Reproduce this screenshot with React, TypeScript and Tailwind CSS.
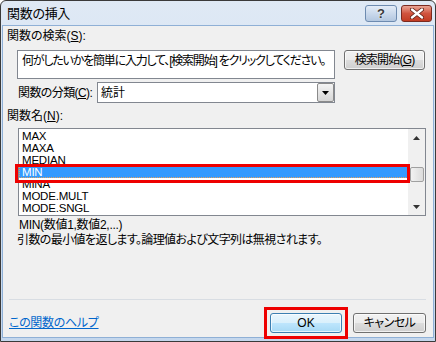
import React from "react";

const font = "font-['Liberation_Sans','Noto_Sans_CJK_JP',sans-serif] [font-feature-settings:'palt']";

function U({ c }: { c: string }) {
  return <span className="underline underline-offset-[1px]">{c}</span>;
}

function Btn({ children, w, def }: { children: React.ReactNode; w: string; def?: boolean }) {
  return (
    <div
      className={`${w} h-[20px] rounded-[3px] border ${def ? "border-[#3c7fb1]" : "border-[#707070]"} flex items-center justify-center text-[12px] leading-[12px] text-black whitespace-nowrap`}
      style={{
        background: def
          ? "linear-gradient(#eaf6fd 0%, #d9f0fc 50%, #bee6fd 50%, #a7d9f5 100%)"
          : "linear-gradient(#f2f2f2 0%, #ebebeb 50%, #dddddd 50%, #cfcfcf 100%)",
        boxShadow: "inset 0 0 0 1px rgba(255,255,255,0.7)",
      }}
    >
      {children}
    </div>
  );
}

const items = ["MAX", "MAXA", "MEDIAN", "MIN", "MINA", "MODE.MULT", "MODE.SNGL"];

export default function App() {
  return (
    <div className={`${font} w-[436px] h-[342px] flex flex-col border border-[#3a3a3a] rounded-t-[6px] bg-gradient-to-b from-[#dfe9f5] to-[#c4d7ed] text-black overflow-hidden`}>
      {/* title bar */}
      <div className="h-[24px] flex items-start justify-between pl-[6px] pr-[3px]">
        <div className="text-[13px] leading-[13px] mt-[6px] tracking-[-0.3px]">関数の挿入</div>
        <div className="flex gap-[4px] mt-[4px]">
          <div className="w-[32px] h-[17px] rounded-[3px] border border-[#6d8bb0] flex items-center justify-center bg-gradient-to-b from-[#e3ecf7] via-[#cad9ec] to-[#b3c7e0]">
            <span className="text-[13px] leading-[13px] font-bold text-[#3a3a3a] [text-shadow:0_0_2px_#fff]">?</span>
          </div>
          <div className="w-[31px] h-[17px] rounded-[3px] border border-[#7a2a20] flex items-center justify-center bg-gradient-to-b from-[#e8a394] via-[#d0533e] to-[#c23b22]">
            <svg width="14" height="11" viewBox="0 0 14 11">
              <path d="M2 1.5 L12 9.5 M12 1.5 L2 9.5" stroke="#5a1f16" strokeWidth="4" strokeLinecap="round" />
              <path d="M2 1.5 L12 9.5 M12 1.5 L2 9.5" stroke="#ffffff" strokeWidth="2.4" strokeLinecap="round" />
            </svg>
          </div>
        </div>
      </div>

      {/* content panel */}
      <div className="flex-1 ml-[1px] mr-[1px] mb-[3px] bg-[#f0f0f0] border border-[#8fb0d6] flex flex-col text-[12px] leading-[12px]">
        <div className="mt-[4px] ml-[4px]">関数の検索(<U c="S" />):</div>

        <div className="mt-[8px] flex items-start">
          <div className="ml-[14px] w-[318px] h-[29px] bg-white border border-[#828790] pl-[4px] pt-[4px] whitespace-nowrap overflow-hidden tracking-[-1.2px]">
            何がしたいかを簡単に入力して、[検索開始] をクリックしてください。
          </div>
          <div className="ml-[9px]">
            <Btn w="w-[81px]"><span className="tracking-[-0.8px]">検索開始(<U c="G" />)</span></Btn>
          </div>
        </div>

        <div className="mt-[3px] flex items-center">
          <div className="ml-[15px] w-[79px] whitespace-nowrap tracking-[-0.6px]">関数の分類(<U c="C" />):</div>
          <div className="w-[238px] h-[21px] bg-white border border-[#828790] flex items-center justify-between">
            <span className="ml-[3px]">統計</span>
            <div className="w-[17px] h-[19px] border border-[#8a8a8a] rounded-[2px] bg-gradient-to-b from-[#f4f4f4] to-[#d6d6d6] flex items-center justify-center">
              <svg width="7" height="4" viewBox="0 0 7 4"><path d="M0 0 H7 L3.5 4 Z" fill="#000" /></svg>
            </div>
          </div>
        </div>

        <div className="mt-[7px] ml-[4px]">関数名(<U c="N" />):</div>

        <div className="mt-[6px] ml-[15px] w-[408px] h-[88px] bg-white border border-[#828790] flex relative">
          <div className="flex-1 pt-[1px]">
            {items.map((it) => (
              <div
                key={it}
                className={`h-[12px] leading-[12px] pl-[3px] text-[11.5px] font-['Liberation_Sans',sans-serif] tracking-[-0.2px] ${
                  it === "MIN" ? "bg-[#3399ff] text-white outline outline-1 outline-dotted outline-[#e0a060] -outline-offset-1" : ""
                }`}
              >
                {it}
              </div>
            ))}
          </div>
          <div className="w-[17px] bg-[#f0f0f0] flex flex-col items-center">
            <div className="h-[17px] w-full flex items-center justify-center">
              <svg width="7" height="4" viewBox="0 0 7 4"><path d="M0 4 H7 L3.5 0 Z" fill="#333" /></svg>
            </div>
            <div className="flex-1 w-full flex flex-col items-center">
              <div className="mt-[21px] w-[14px] h-[15px] rounded-[2px] border border-[#a0a0a0] bg-gradient-to-r from-[#f2f2f2] to-[#dcdcdc]" />
            </div>
            <div className="h-[17px] w-full flex items-center justify-center">
              <svg width="7" height="4" viewBox="0 0 7 4"><path d="M0 0 H7 L3.5 4 Z" fill="#333" /></svg>
            </div>
          </div>
          <div className="absolute left-[-4px] top-[35px] w-[395px] h-[19px] border-[3px] border-[#ee0000]" />
        </div>

        <div className="mt-[3px] ml-[16px] tracking-[-0.3px]">MIN(数値1,数値2,...)</div>
        <div className="mt-[3px] ml-[14px] tracking-[-0.6px]">引数の最小値を返します。論理値および文字列は無視されます。</div>

        <div className="mt-[53px] ml-[6px] w-[417px] h-[1px] bg-[#d8dde3]" />

        <div className="mt-[13px] flex items-center justify-between">
          <span className="ml-[6px] text-[#0066cc] underline underline-offset-[1px] tracking-[-0.3px]">この関数のヘルプ</span>
          <div className="flex gap-[11px] mr-[7px]">
            <div className="relative">
              <Btn w="w-[72px]" def>OK</Btn>
              <div className="absolute left-[-6px] top-[-6px] w-[84px] h-[32px] border-[3px] border-[#ee0000]" />
            </div>
            <Btn w="w-[73px]"><span className="tracking-[-0.5px]">キャンセル</span></Btn>
          </div>
        </div>
      </div>
    </div>
  );
}
